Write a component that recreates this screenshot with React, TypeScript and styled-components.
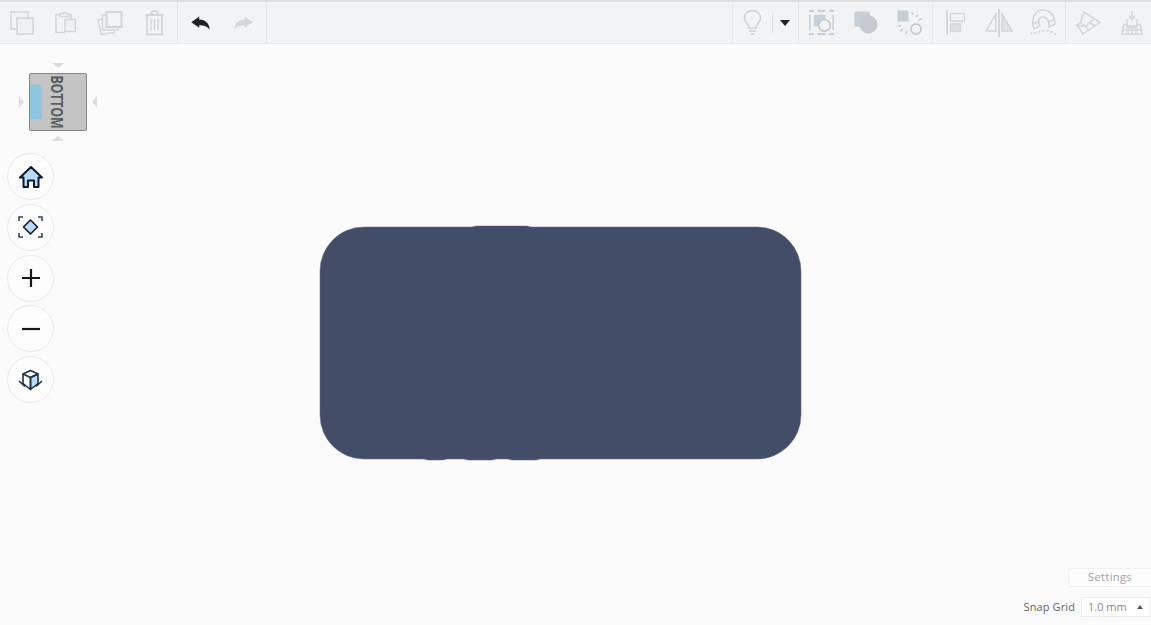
import React from "react";
import styled, { createGlobalStyle } from "styled-components";

const Global = createGlobalStyle`
  html, body { margin: 0; padding: 0; height: 100%; background: #fbfbfb; overflow: hidden; }
  body { font-family: "Open Sans", "Liberation Sans", sans-serif; }
  #root { height: 100%; }
`;

const Page = styled.div`
  width: 1151px;
  height: 625px;
  display: flex;
  flex-direction: column;
  background: #fbfbfb;
  overflow: hidden;
`;

const Toolbar = styled.header`
  flex: 0 0 44px;
  box-sizing: border-box;
  height: 44px;
  margin-right: -3px;
  display: flex;
  align-items: stretch;
  background: #f2f3f4;
  border-top: 2px solid #dfe0e2;
  border-bottom: 1px solid #e6e7e8;
  filter: blur(0.3px);
`;

const Group = styled.div<{ $edge?: "left" | "right"; $pad?: number }>`
  display: flex;
  align-items: center;
  flex: 0 0 auto;
  padding-right: ${(p) => p.$pad ?? 0}px;
  ${(p) => (p.$edge === "left" ? "border-left: 1px solid #e6e7e8;" : "")}
  ${(p) => (p.$edge === "right" ? "border-right: 1px solid #e6e7e8;" : "")}
`;

const Spacer = styled.div`
  flex: 1;
`;

const ToolButton = styled.div<{ $w?: number }>`
  flex: 0 0 ${(p) => p.$w ?? 44}px;
  height: 100%;
  display: flex;
  align-items: center;
  justify-content: center;
`;

const SmallDivider = styled.div`
  width: 1px;
  height: 22px;
  background: #e2e3e5;
`;

const Canvas = styled.main`
  position: relative;
  flex: 1;
`;

const NavColumn = styled.nav`
  position: absolute;
  left: 7px;
  top: 109px;
  display: flex;
  flex-direction: column;
  gap: 3.75px;
`;

const NavButton = styled.div`
  box-sizing: border-box;
  width: 47px;
  height: 47px;
  border-radius: 50%;
  background: #fdfdfe;
  border: 1.5px solid #e9e9ea;
  display: flex;
  align-items: center;
  justify-content: center;
`;

const CubeWrap = styled.div`
  position: absolute;
  left: 16px;
  top: 16px;
  line-height: 0;
`;

const Face = styled.div`
  position: absolute;
  left: 13px;
  top: 13px;
  box-sizing: border-box;
  width: 58px;
  height: 58px;
  background: #c4c4c4;
  border: 1.5px solid #83868a;
  border-radius: 2px;
  display: flex;
  align-items: center;
  justify-content: center;
`;

const FaceTint = styled.div`
  position: absolute;
  left: 0;
  top: 11px;
  width: 12px;
  height: 34px;
  background: #8cc6e0;
`;

const FaceLabel = styled.span`
  transform: rotate(90deg) scale(0.92, 1.15);
  position: relative;
  left: -1px;
  font-family: "Open Sans", "Liberation Sans", sans-serif;
  font-weight: 700;
  font-size: 13.5px;
  line-height: 14px;
  letter-spacing: -0.2px;
  color: #5a5d62;
`;

const ShapeWrap = styled.div`
  position: absolute;
  left: 318px;
  top: 179px;
  line-height: 0;
`;

const Footer = styled.div`
  position: absolute;
  right: 0;
  bottom: 8px;
  display: flex;
  flex-direction: column;
  align-items: flex-end;
  gap: 10px;
`;

const SettingsButton = styled.div`
  box-sizing: border-box;
  width: 83px;
  height: 19px;
  background: #fdfdfd;
  border: 1px solid #f1f1f1;
  border-right: none;
  border-radius: 3px 0 0 3px;
  font-size: 11px;
  letter-spacing: 0.4px;
  line-height: 15px;
  color: #a0a3a6;
  text-align: center;
`;

const SnapRow = styled.div`
  display: flex;
  align-items: center;
  gap: 6px;
`;

const SnapLabel = styled.span`
  font-size: 11px;
  letter-spacing: 0.1px;
  padding-bottom: 2px;
  color: #5f6468;
`;

const SnapSelect = styled.div`
  box-sizing: border-box;
  width: 70px;
  height: 20px;
  background: #fff;
  border: 1px solid #ececec;
  display: flex;
  align-items: center;
  justify-content: space-between;
  padding: 0 7px 2px 6px;
  font-size: 11px;
  color: #85888b;
`;

const Caret = styled.span`
  width: 0;
  height: 0;
  margin-top: 2px;
  border-left: 3px solid transparent;
  border-right: 3px solid transparent;
  border-bottom: 4px solid #55585c;
`;

const G = "#d3d7da";
const B = "#c6d0d9";

const Copy = () => (
  <svg width="24" height="24" viewBox="0 0 24 24" fill="none" stroke={G} strokeWidth="1.6">
    <path d="M7 18H1V1h17v6" />
    <rect x="7" y="7" width="16" height="16" fill="#eff0f1" />
  </svg>
);
const Paste = () => (
  <svg width="22" height="23" viewBox="0 0 22 23" fill="none" stroke={G} strokeWidth="1.5">
    <path d="M10 21.5H1V3.5h15V8" />
    <path d="M5 5.5V2.5h3a1.6 1.6 0 0 1 3 0h2.5v3z" fill="#eff0f1" />
    <rect x="10" y="8.5" width="10.5" height="12" fill="#eff0f1" />
  </svg>
);
const Duplicate = () => (
  <svg width="26" height="26" viewBox="0 0 26 26" fill="none" stroke={G} strokeWidth="1.5">
    <path d="M9 5H5.5v15H21v-2.5" />
    <path d="M5 9L1 10l3 14.5 13.5-2 .5-2" />
    <rect x="9.5" y="2" width="15" height="15" strokeWidth="2.2" fill="#f2f3f4" />
  </svg>
);
const Trash = () => (
  <svg width="19" height="26" viewBox="0 0 19 26" fill="none" stroke={G} strokeWidth="1.8">
    <path d="M0.5 5h18M6 5C6 2.5 7 1 9.5 1S13 2.5 13 5" />
    <path d="M2 5v19.5h15V5" />
    <path d="M6 9v11.5M9.5 9v11.5M13 9v11.5" strokeWidth="1.4" />
  </svg>
);
const Undo = () => (
  <svg width="21" height="14" viewBox="0 0 22 16" fill="#1f2225">
    <path d="M0.5 7L9.500 0.500V4C15.500 4 21 7.500 21.500 15.500C18.500 11.500 15 10.500 9.500 10.500V13.500z" />
  </svg>
);
const Redo = () => (
  <svg width="21" height="14" viewBox="0 0 22 16" fill="#d4d8db">
    <path d="M21.500 7L12.500 0.500V4C6.500 4 1 7.500 0.500 15.500C3.500 11.500 7 10.500 12.500 10.500V13.500z" />
  </svg>
);
const Bulb = () => (
  <svg width="19" height="26" viewBox="0 0 20 27" fill="none" stroke="#d0d4d7" strokeWidth="1.7">
    <path d="M6.500 19c0-4-5-6-5-11a8.500 7.500 0 0 1 17 0c0 5-5 7-5 11z" />
    <path d="M6.500 22h7M8 25h4" />
  </svg>
);
const Down = () => (
  <svg width="10" height="6" viewBox="0 0 10 6" fill="#1f2124"><path d="M0 0h10L5 6z" /></svg>
);
const Group3 = () => (
  <svg width="27" height="27" viewBox="0 0 28 28" fill="none">
    <path d="M1 2h5M10 2h8M22 2h5M1 26h5M10 26h8M22 26h5" stroke={B} strokeWidth="2.4" />
    <path d="M2 6v16M26 6v16" stroke={B} strokeWidth="1.6" />
    <rect x="6" y="6" width="12" height="12" fill={B} />
    <circle cx="17" cy="17" r="6" fill="#f2f3f4" stroke="#c5cbd0" strokeWidth="1.8" />
  </svg>
);
const Solid = () => (
  <svg width="24" height="23" viewBox="0 0 25 24">
    <rect x="0.500" y="0.500" width="16" height="16" rx="1.500" fill={B} />
    <circle cx="15" cy="14" r="9.500" fill="#c5cbd0" />
  </svg>
);
const Hole = () => (
  <svg width="26" height="26" viewBox="0 0 26 26" fill="none">
    <rect x="0.500" y="0.500" width="11" height="11" fill={B} />
    <circle cx="19" cy="19" r="5" stroke="#c5cbd0" strokeWidth="1.8" />
    <path d="M15 2l1 3M21 5l-2 2M25 9l-4 1M1 16l3-.5M3 22l3-3M9 24l1-3" stroke={B} strokeWidth="1.500" />
  </svg>
);
const Align = () => (
  <svg width="20" height="25" viewBox="0 0 20 25" fill="none" stroke={G}>
    <path d="M2 0v25" strokeWidth="2" />
    <rect x="5.500" y="3.500" width="14" height="7.500" strokeWidth="1.500" />
    <rect x="5.500" y="14" width="10" height="7.500" strokeWidth="1.500" fill="#dfe2e4" />
  </svg>
);
const Mirror = () => (
  <svg width="28" height="28" viewBox="0 0 28 28" fill="none" stroke={G} strokeWidth="1.500">
    <path d="M14 0v28" strokeWidth="2" />
    <path d="M11 5v17H1z" />
    <path d="M17 5v17h10z" fill="#dfe2e4" />
  </svg>
);
const Magnet = () => (
  <svg width="27" height="27" viewBox="0 0 27 27" fill="none" stroke={G} strokeWidth="1.600">
    <path d="M4 20C0 9 6 1 13 1c7 0 12 5 12 14l-6 3c1-6-2-10-6-10s-6 4-3 9z" />
    <path d="M2.500 15l5.500-2M18 13l6.500-2.500" />
    <path d="M0 24c5 2 9-2.500 15-2.500 5 0 8 1.500 11 4.500" strokeDasharray="2 2.200" strokeWidth="1.800" />
  </svg>
);
const Workplane = () => (
  <svg width="25" height="24" viewBox="0 0 25 24" fill="none" stroke={G} strokeWidth="1.500" strokeLinejoin="round">
    <path d="M8 1l16 10.500L7 23 .8 14 4.500 11z" />
    <path d="M4.500 11L9.500 15.500 18 7.500" />
    <path d="M9.500 15.500L.8 14M9.500 15.500L13 19.500M14 12l5 3" />
  </svg>
);
const Ruler = () => (
  <svg width="22" height="24" viewBox="0 0 22 24" fill="none" stroke={G} strokeWidth="1.500">
    <path d="M11 0v8M8 5l3 3.500L14 5" />
    <path d="M6 8v7h10V8" />
    <path d="M1 23h20l-1.500-9H16l-.5 2.500h-9L6 14H2.500z" />
    <path d="M1.300 19h19.400M7 16.500V23M11 16.500V23M15 16.500V23" />
  </svg>
);

const Ink = "#0e1b2b";
const Blue = "#b7dcfb";

const Home = () => (
  <svg width="24" height="22" viewBox="0 0 24 22">
    <path d="M12 1L1 11.500h3.500V21H9v-6.500h6V21h4.500v-9.500H23z" fill={Blue} stroke={Ink} strokeWidth="2" strokeLinejoin="round" />
  </svg>
);
const Fit = () => (
  <svg width="25" height="24" viewBox="0 0 25 24" fill="none">
    <path d="M1 6V2h4M20 2h4v4M1 18v4h4M20 22h4v-4" stroke="#36465a" strokeWidth="1.600" />
    <path d="M12.500 5l7 7-7 7-7-7z" fill={Blue} stroke={Ink} strokeWidth="1.600" strokeLinejoin="round" />
  </svg>
);
const Plus = () => (
  <svg width="20" height="20" viewBox="0 0 20 20" stroke="#15181c" strokeWidth="2.200">
    <path d="M1 10h18M10 1v18" />
  </svg>
);
const Minus = () => (
  <svg width="20" height="4" viewBox="0 0 20 4" stroke="#15181c" strokeWidth="2.200">
    <path d="M1 2h18" />
  </svg>
);
const Box = () => (
  <svg width="25" height="22" viewBox="0 0 25 22" fill="none" stroke="#20303f" strokeWidth="1.600" strokeLinejoin="round">
    <path d="M12.500 8.500l7.500-3.500V14.500l-7.500 6z" fill={Blue} />
    <path d="M12.500 1.500L20 5l-7.500 3.500L5 5z" />
    <path d="M5 5v9.500l7.500 6v-12" />
    <path d="M1 12l6 5.500M24 12l-6 5.500" />
  </svg>
);

const CubeArrows = () => (
  <svg width="84" height="84" viewBox="0 0 84 84" fill="#dcdcdd">
    <path d="M36 3h12l-6 5z" />
    <path d="M36 81h12l-6-5z" />
    <path d="M3 36v12l5-6z" />
    <path d="M81 36v12l-5-6z" />
  </svg>
);

const Shape = () => (
  <svg width="486" height="238" viewBox="0 0 486 238">
    <path
      d="M46 4 H154 L158 3 H209 L213 4 H439 A44 44 0 0 1 483 48 V192 A44 44 0 0 1 439 236 H222 L218 237 H194 L190 236 H178 L174 237 H150 L146 236 H129 L125 237 H110 L106 236 H46 A44 44 0 0 1 2 192 V48 A44 44 0 0 1 46 4 Z"
      fill="#434d68"
      stroke="#5b6a88"
      strokeWidth="0.5"
    />
  </svg>
);

export default function App() {
  return (
    <Page>
      <Global />
      <Toolbar>
        <Group $edge="right" $pad={1}>
          <ToolButton><Copy /></ToolButton>
          <ToolButton><Paste /></ToolButton>
          <ToolButton><Duplicate /></ToolButton>
          <ToolButton><Trash /></ToolButton>
        </Group>
        <Group $edge="right" $pad={2}>
          <ToolButton><Undo /></ToolButton>
          <ToolButton $w={42}><Redo /></ToolButton>
        </Group>
        <Spacer />
        <Group $edge="left" $pad={2}>
          <ToolButton $w={39}><Bulb /></ToolButton>
          <SmallDivider />
          <ToolButton $w={23}><Down /></ToolButton>
        </Group>
        <Group $edge="left">
          <ToolButton><Group3 /></ToolButton>
          <ToolButton $w={45}><Solid /></ToolButton>
          <ToolButton><Hole /></ToolButton>
        </Group>
        <Group $edge="left">
          <ToolButton><Align /></ToolButton>
          <ToolButton><Mirror /></ToolButton>
          <ToolButton><Magnet /></ToolButton>
        </Group>
        <Group $edge="left">
          <ToolButton><Workplane /></ToolButton>
          <ToolButton><Ruler /></ToolButton>
        </Group>
      </Toolbar>
      <Canvas>
        <CubeWrap>
          <CubeArrows />
          <Face>
            <FaceTint />
            <FaceLabel>BOTTOM</FaceLabel>
          </Face>
        </CubeWrap>
        <NavColumn>
          <NavButton><Home /></NavButton>
          <NavButton><Fit /></NavButton>
          <NavButton><Plus /></NavButton>
          <NavButton><Minus /></NavButton>
          <NavButton><Box /></NavButton>
        </NavColumn>
        <ShapeWrap>
          <Shape />
        </ShapeWrap>
        <Footer>
          <SettingsButton>Settings</SettingsButton>
          <SnapRow>
            <SnapLabel>Snap Grid</SnapLabel>
            <SnapSelect>
              1.0 mm
              <Caret />
            </SnapSelect>
          </SnapRow>
        </Footer>
      </Canvas>
    </Page>
  );
}
